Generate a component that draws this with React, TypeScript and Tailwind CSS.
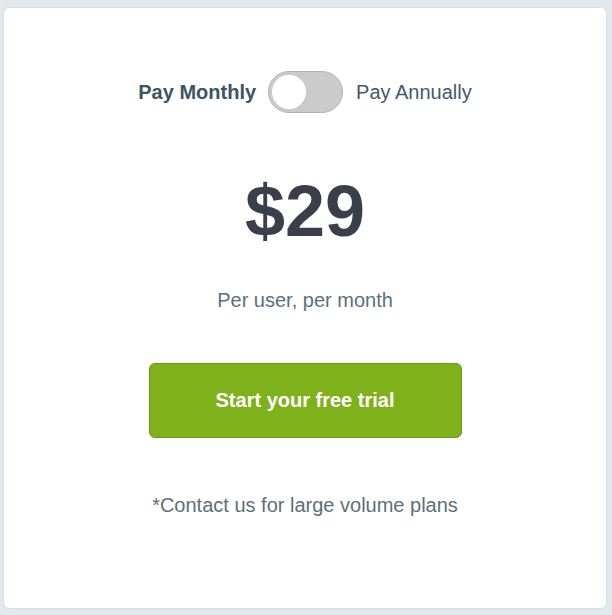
import { useState } from 'react';

export default function App() {
  const [annual, setAnnual] = useState(false);

  return (
    <div className="w-[612px] h-[615px] bg-[#e2e9ec] pt-[8px] pl-[4px] pr-[6px] pb-[7px]" style={{ fontFamily: '"Liberation Sans", Arial, sans-serif' }}>
      <div className="h-full bg-white rounded-[5px] shadow-[0_0_2px_rgba(120,140,150,0.35)] flex flex-col items-center pt-[63px]">
        <div className="flex items-center h-[42px]">
          <span className="text-[20px] font-bold text-[#3d5465] mr-[12px]">Pay Monthly</span>
          <button
            onClick={() => setAnnual(!annual)}
            className="w-[75px] h-[42px] rounded-full bg-[#cbcbcb] border border-[#b4b4b4] flex items-center px-[3px]"
          >
            <span className={`w-[34px] h-[34px] rounded-full bg-white block ${annual ? 'ml-auto' : ''}`} />
          </button>
          <span className="text-[20px] text-[#45596a] ml-[13px]">Pay Annually</span>
        </div>

        <div className="mt-[62px] text-[72px] leading-none font-bold text-[#3b3f4a]">
          {annual ? '$24' : '$29'}
        </div>

        <div className="mt-[39px] text-[20px] leading-[28px] text-[#5c707c]">Per user, per month</div>

        <button className="mt-[49px] w-[313px] h-[75px] rounded-[6px] bg-[#7fb11b] border border-[#6b9a12] text-white text-[20px] font-bold pb-[2px]">
          Start your free trial
        </button>

        <div className="mt-[53px] text-[20px] leading-[28px] text-[#5c6f7a]">*Contact us for large volume plans</div>
      </div>
    </div>
  );
}
